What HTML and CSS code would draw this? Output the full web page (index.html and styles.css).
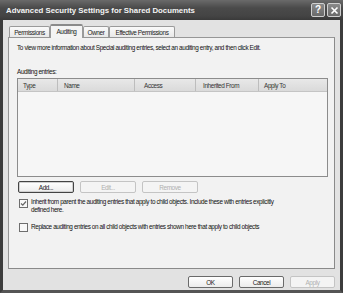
FILE: index.html
```html
<!DOCTYPE html>
<html>
<head>
<meta charset="utf-8">
<link rel="stylesheet" href="styles.css">
</head>
<body>
<div class="window">
  <div class="titlebar">
    <span class="title">Advanced Security Settings for Shared Documents</span>
    <div class="tbtns">
      <span class="tbtn">?</span>
      <span class="tbtn"><svg width="9" height="9" viewBox="0 0 9 9"><path d="M1.5 1.5L7.5 7.5M7.5 1.5L1.5 7.5" stroke="#fff" stroke-width="1.6"/></svg></span>
    </div>
  </div>
  <div class="body">
    <div class="tabs">
      <span class="tab t1">Permissions</span>
      <span class="tab t2 active">Auditing</span>
      <span class="tab t3">Owner</span>
      <span class="tab t4">Effective Permissions</span>
    </div>
    <div class="panel">
      <p class="info">To view more information about Special auditing entries, select an auditing entry, and then click Edit.</p>
      <p class="label">Auditing entries:</p>
      <div class="list">
        <div class="head">
          <span class="col c1">Type</span>
          <span class="col c2">Name</span>
          <span class="col c3">Access</span>
          <span class="col c4">Inherited From</span>
          <span class="col c5">Apply To</span>
        </div>
      </div>
      <div class="btnrow">
        <span class="btn focus">Add...</span>
        <span class="btn disabled">Edit...</span>
        <span class="btn disabled">Remove</span>
      </div>
      <div class="check first">
        <span class="box"><svg width="7" height="7" viewBox="0 0 7 7"><path d="M1 3.5L2.8 5.2L6 1.5" fill="none" stroke="#666" stroke-width="1.2"/></svg></span>
        <span class="ctext">Inherit from parent the auditing entries that apply to child objects. Include these with entries explicitly defined here.</span>
      </div>
      <div class="check second">
        <span class="box"></span>
        <span class="ctext">Replace auditing entries on all child objects with entries shown here that apply to child objects</span>
      </div>
    </div>
    <div class="footer">
      <span class="btn fb">OK</span>
      <span class="btn fb">Cancel</span>
      <span class="btn fb disabled">Apply</span>
    </div>
  </div>
</div>
</body>
</html>
```
FILE: styles.css
```css
* { box-sizing: border-box; }
html, body { margin: 0; padding: 0; }
body {
  width: 343px;
  height: 293px;
  background: #3a3a3a;
  font-family: "Liberation Sans", Arial, sans-serif;
  font-size: 6.4px;
  letter-spacing: -0.38px;
  color: #111;
}
.window {
  width: 343px;
  height: 293px;
  display: flex;
  flex-direction: column;
  background: #e2e2e2;
  border-left: 3px solid #3c3c3c;
  border-right: 3px solid #3c3c3c;
  border-bottom: 3px solid #555;
}
.titlebar {
  height: 20px;
  margin: 0 -3px;
  background: linear-gradient(#6a6a6a, #4a4a4a 40%, #444 80%, #3a3a3a);
  display: flex;
  align-items: center;
  justify-content: space-between;
  padding: 0 2px 0 6px;
}
.title {
  color: #f4f4f4;
  font-weight: bold;
  font-size: 7.8px;
  letter-spacing: 0;
}
.tbtns { display: flex; gap: 2px; }
.tbtn {
  width: 14px;
  height: 14px;
  border: 1px solid #cfcfcf;
  border-radius: 2px;
  background: linear-gradient(#8a8a8a, #6a6a6a);
  color: #fff;
  font-weight: bold;
  font-size: 10px;
  letter-spacing: 0;
  display: flex;
  align-items: center;
  justify-content: center;
  line-height: 1;
}
.body {
  flex: 1;
  display: flex;
  flex-direction: column;
  padding: 3px 5px 0 5px;
}
.tabs {
  display: flex;
  height: 14px;
  align-items: flex-end;
  padding-left: 1px;
  position: relative;
  z-index: 1;
}
.tab {
  height: 11px;
  border: 1px solid #9a9a9a;
  border-bottom: none;
  border-radius: 2px 2px 0 0;
  background: linear-gradient(#fafafa, #e8e8e8);
  display: flex;
  align-items: center;
  justify-content: center;
  color: #222;
}
.t1 { width: 41px; }
.t2 { width: 33px; }
.t3 { width: 26px; }
.t4 { width: 66px; }
.tab.active {
  height: 14px;
  background: #f4f4f4;
  margin-bottom: -1px;
  border-top: 2px solid #8a8a8a;
  padding-bottom: 2px;
}
.panel {
  height: 232px;
  width: 327px;
  background: #f2f2f2;
  border: 1px solid #969696;
  border-right-color: #8a8a8a;
  border-bottom-color: #8a8a8a;
  padding: 6px 0 0 8px;
  display: flex;
  flex-direction: column;
}
p { margin: 0; }
.info { line-height: 8px; }
.label { margin-top: 16px; line-height: 8px; }
.list {
  margin-top: 2px;
  width: 311px;
  height: 99px;
  background: #f6f6f6;
  border: 1px solid #8c8c8c;
}
.head {
  display: flex;
  height: 13px;
  background: linear-gradient(#e8e8e8, #dadada);
  border-bottom: 1px solid #c4c4c4;
}
.col {
  display: flex;
  align-items: center;
  border-right: 1px solid #bdbdbd;
  color: #333;
}
.c1 { width: 40px; padding-left: 5px; }
.c2 { width: 77px; padding-left: 6px; }
.c3 { width: 61px; padding-left: 9px; }
.c4 { width: 63px; padding-left: 7px; }
.c5 { width: 60px; padding-left: 5px; border-right: none; }
.btnrow {
  margin-top: 4px;
  display: flex;
  gap: 6px;
  padding-left: 1px;
}
.btn {
  width: 56px;
  height: 12px;
  border: 1px solid #6a6a6a;
  border-radius: 2px;
  background: linear-gradient(#ffffff, #ececec);
  display: flex;
  align-items: center;
  justify-content: center;
  color: #222;
}
.btn.focus { border: 1px solid #444; box-shadow: inset 0 0 0 1px #d0d0d0; }
.btn.disabled {
  color: #b0b0b0;
  border-color: #c4c4c4;
  background: #f4f4f4;
}
.check {
  display: flex;
  align-items: flex-start;
  gap: 3px;
  padding-left: 2px;
}
.check.first { margin-top: 5px; }
.check.second { margin-top: 8px; }
.box {
  flex: none;
  width: 9px;
  height: 9px;
  border: 1px solid #6e6e6e;
  background: #f8f8f8;
  display: flex;
  align-items: center;
  justify-content: center;
  margin-top: 1px;
}
.ctext { width: 255px; line-height: 8px; margin-top: 0; }
.second .ctext { width: 290px; margin-top: 1px; }
.footer {
  display: flex;
  justify-content: flex-end;
  gap: 6px;
  padding: 7px 0 0 0;
}
.btn.fb { width: 45px; }
```
